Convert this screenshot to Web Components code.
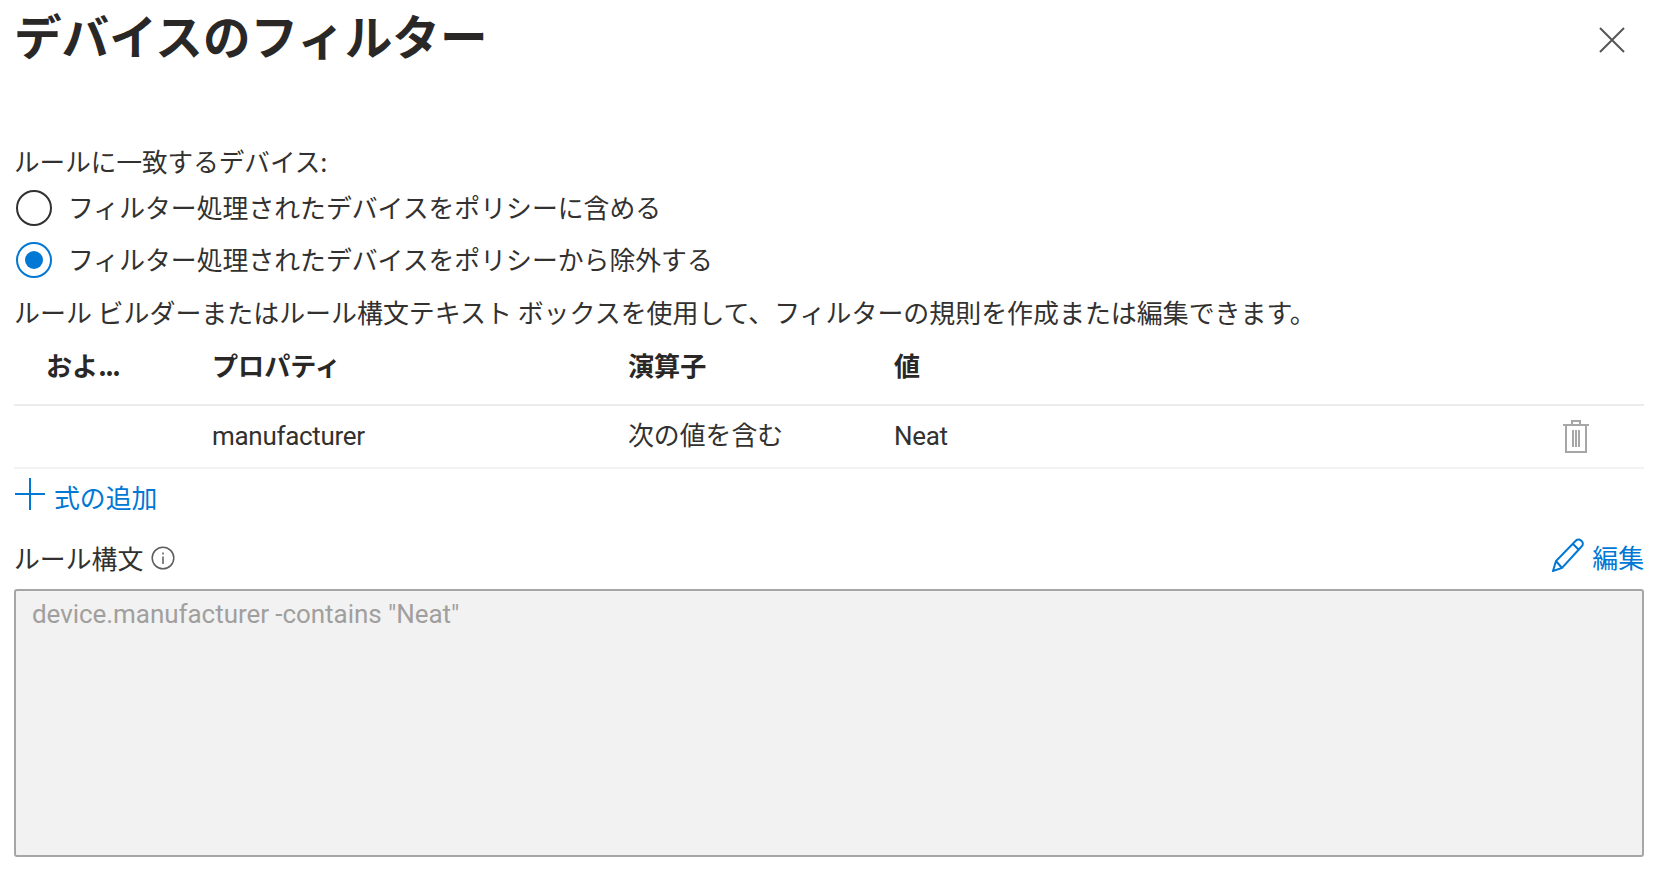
<!doctype html>
<html lang="ja">
<head>
<meta charset="utf-8">
<title>デバイスのフィルター</title>
<style>
  html,body{margin:0;background:#fff}
  body{font-family:"Noto Sans CJK JP",sans-serif;color:#323130;font-size:25.85px}
</style>
</head>
<body>
<filter-panel>
  <span slot="title">デバイスのフィルター</span>
  <div class="body">
    <rule-mode></rule-mode>
    <rule-table></rule-table>
    <rule-syntax></rule-syntax>
  </div>
</filter-panel>
<script>
const CJK = '"Noto Sans CJK JP",sans-serif';

class FilterPanel extends HTMLElement {
  constructor() {
    super();
    this.attachShadow({ mode: "open" });
    this.shadowRoot.innerHTML = `
      <style>
        :host{display:block;width:1670px;height:874px;overflow:hidden;box-sizing:border-box;padding:0 26px 0 14px}
        header{display:flex;justify-content:space-between;align-items:flex-start;height:143px}
        h1{margin:0;font:700 47.6px/70px ${CJK};color:#292827}
        button{border:0;background:none;padding:0;margin:26px 18px 0 0;width:28px;height:28px}
        svg{display:block}
      </style>
      <header>
        <h1><slot name="title"></slot></h1>
        <button aria-label="閉じる">
          <svg width="28" height="28" viewBox="0 0 28 28" fill="none" stroke="#555" stroke-width="2"><path d="M2 2l24 24M26 2L2 26"/></svg>
        </button>
      </header>
      <slot></slot>
    `;
  }
}

class RuleMode extends HTMLElement {
  constructor() {
    super();
    this.attachShadow({ mode: "open" });
    this.shadowRoot.innerHTML = `
      <style>
        :host{display:block;font:25.85px/36px ${CJK};color:#323130}
        .row{display:flex;align-items:center;gap:16px;height:52px;padding-left:2px}
        .row.first{height:53px}
        .t{margin-bottom:2px}
        .lbl{height:38px;font-size:25.6px}
        .r{width:36px;height:36px;box-sizing:border-box;border:2px solid #323130;border-radius:50%;display:flex;align-items:center;justify-content:center}
        .on{border-color:#0078d4}
        .on i{display:block;width:18px;height:18px;border-radius:50%;background:#0078d4}
        .help{height:52px;line-height:52px;font-size:25.95px}
      </style>
      <div class="lbl">ルールに一致するデバイス:</div>
      <div class="row first"><span class="r"></span><span class="t">フィルター処理されたデバイスをポリシーに含める</span></div>
      <div class="row"><span class="r on"><i></i></span><span class="t">フィルター処理されたデバイスをポリシーから除外する</span></div>
      <div class="help">ルール ビルダーまたはルール構文テキスト ボックスを使用して、フィルターの規則を作成または編集できます。</div>
    `;
  }
}

class RuleTable extends HTMLElement {
  constructor() {
    super();
    this.attachShadow({ mode: "open" });
    this.shadowRoot.innerHTML = `
      <style>
        :host{display:block;font:25.85px/36px ${CJK};color:#323130}
        .g{display:grid;grid-template-columns:198px 416px 266px 1fr 81px;align-items:center;border-bottom:2px solid #edebe9}
        .head{height:68px;box-sizing:border-box;font-weight:700;font-size:26.1px;color:#292827;padding-bottom:12px}
        .head > span:first-child{padding-left:32px}
        .dots{letter-spacing:-1.4px}
        .row{height:63px;box-sizing:border-box;border-bottom-color:#f3f2f1;padding-bottom:2px}
        .lat{font-family:Roboto,${CJK};font-size:26px;letter-spacing:-.3px}
        .op{margin-top:-3px}
        .del{display:flex}
        .add{display:flex;align-items:center;gap:9px;height:56px;margin-bottom:2px;color:#0078d4;padding-left:1px}
        .add svg{margin-top:-6px}
      </style>
      <div class="g head"><span>およ<span class="dots">...</span></span><span>プロパティ</span><span>演算子</span><span>値</span><span></span></div>
      <div class="g row">
        <span></span><span class="lat">manufacturer</span><span class="op">次の値を含む</span><span class="lat">Neat</span>
        <span class="del">
          <svg width="26" height="34" viewBox="0 0 26 34" fill="none" stroke="#a6a6a6" stroke-width="2"><path d="M0 6h26M9 6V2h8v4M3 6v27h20V6M10 11v17M13 11v17M16 11v17"/></svg>
        </span>
      </div>
      <div class="add">
        <svg width="30" height="32" viewBox="0 0 30 32" fill="none" stroke="#0078d4" stroke-width="2"><path d="M15 0v32M0 16h30"/></svg>
        <span>式の追加</span>
      </div>
    `;
  }
}

class RuleSyntax extends HTMLElement {
  constructor() {
    super();
    this.attachShadow({ mode: "open" });
    this.shadowRoot.innerHTML = `
      <style>
        :host{display:block;font:25.85px/36px ${CJK};color:#323130}
        .top{display:flex;justify-content:space-between;align-items:center;height:62px}
        .l,.e{display:flex;align-items:center}
        .l{gap:8px}
        .e{gap:8px;color:#0078d4;margin-top:1px}
        .e svg{margin-top:-7px}
        .e span{margin-bottom:3px}
        .box{box-sizing:border-box;height:268px;border:2px solid #a6a6a6;border-radius:3px;background:#f2f2f2;padding:5px 16px;color:#a19f9d;font-family:Roboto,${CJK};font-size:26px;letter-spacing:-.05px}
      </style>
      <div class="top">
        <div class="l"><span>ルール構文</span>
          <svg width="24" height="24" viewBox="0 0 24 24" fill="none" stroke="#605e5c" stroke-width="1.5"><circle cx="12" cy="12" r="10.8"/><path d="M12 10.5v7.5M12 6.5v2"/></svg>
        </div>
        <div class="e">
          <svg width="32" height="34" viewBox="0 0 32 34" fill="none" stroke="#0078d4" stroke-width="2"><path d="M1 33l3-10L24 2.500a3.500 3.500 0 0 1 5 0l.8.8a3.500 3.500 0 0 1 0 5L10 30zM4 23l6 7M21 6l6 6"/></svg>
          <span>編集</span>
        </div>
      </div>
      <div class="box">device.manufacturer -contains "Neat"</div>
    `;
  }
}

customElements.define("filter-panel", FilterPanel);
customElements.define("rule-mode", RuleMode);
customElements.define("rule-table", RuleTable);
customElements.define("rule-syntax", RuleSyntax);
</script>
</body>
</html>
